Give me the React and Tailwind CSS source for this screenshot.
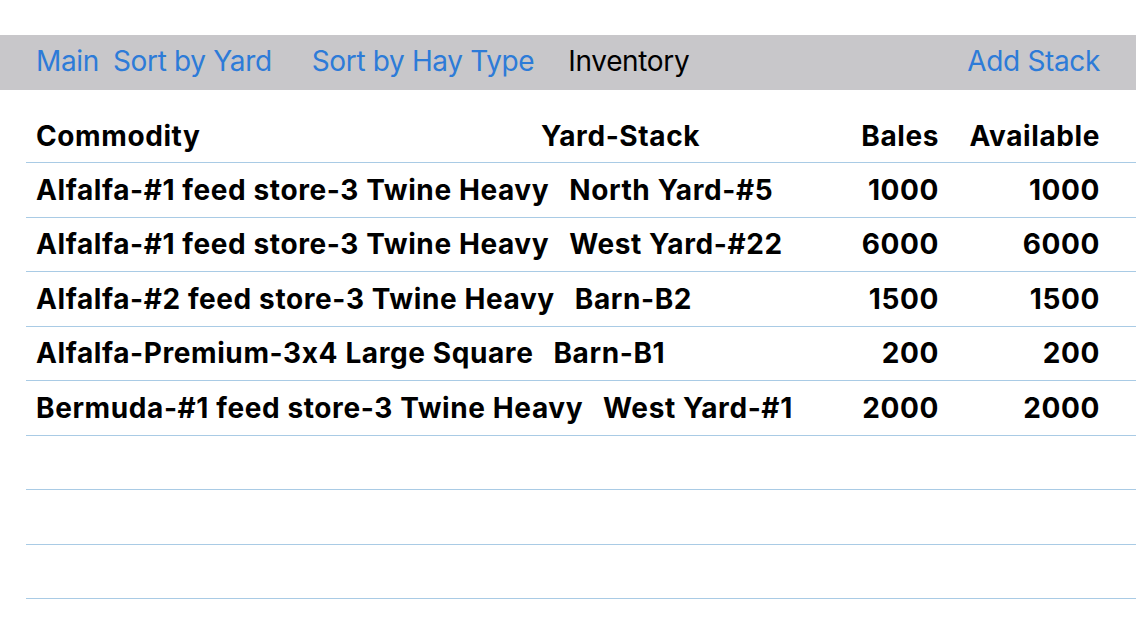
const rows = [
  { commodity: 'Alfalfa-#1 feed store-3 Twine Heavy', yard: 'North Yard-#5', bales: 1000, available: 1000 },
  { commodity: 'Alfalfa-#1 feed store-3 Twine Heavy', yard: 'West Yard-#22', bales: 6000, available: 6000 },
  { commodity: 'Alfalfa-#2 feed store-3 Twine Heavy', yard: 'Barn-B2', bales: 1500, available: 1500 },
  { commodity: 'Alfalfa-Premium-3x4 Large Square', yard: 'Barn-B1', bales: 200, available: 200 },
  { commodity: 'Bermuda-#1 feed store-3 Twine Heavy', yard: 'West Yard-#1', bales: 2000, available: 2000 },
];

function App() {
  return (
    <div className="h-[639px] w-[1136px] overflow-hidden bg-white font-['Inter',sans-serif] [font-feature-settings:'calt'_0]">
      <div className="h-[35px]" />
      <nav className="flex h-[55px] items-center bg-[#c8c7ca] pb-[3px] pl-[36px] pr-[36px] text-[28px] tracking-[-0.35px]">
        <span className="text-[#2d7bd8]">Main</span>
        <span className="ml-[14px] text-[#2d7bd8]">Sort by Yard</span>
        <span className="ml-[40px] text-[#2d7bd8]">Sort by Hay Type</span>
        <span className="ml-[34px] text-black">Inventory</span>
        <span className="ml-auto text-[#2d7bd8]">Add Stack</span>
      </nav>

      <div className="ml-[26px] text-[28px] font-bold tracking-[0.6px] text-black">
        <div className="flex h-[73px] items-end border-b border-[#a9cbe5] pb-[5px] pl-[10px] pr-[36px]">
          <span className="w-[505px]">Commodity</span>
          <span className="flex-1">Yard-Stack</span>
          <span className="w-[110px] text-right">Bales</span>
          <span className="w-[161px] text-right">Available</span>
        </div>
        {rows.map((r, i) => (
          <div key={i} className="flex h-[54.5px] items-center border-b border-[#a9cbe5] pl-[10px] pr-[36px]">
            <span className="flex-1 whitespace-nowrap">
              {r.commodity}
              <span className="ml-[20px]">{r.yard}</span>
            </span>
            <span className="w-[110px] text-right">{r.bales}</span>
            <span className="w-[161px] text-right">{r.available}</span>
          </div>
        ))}
        {[0, 1, 2].map((i) => (
          <div key={i} className="h-[54.5px] border-b border-[#a9cbe5]" />
        ))}
      </div>
    </div>
  );
}

export default App;
